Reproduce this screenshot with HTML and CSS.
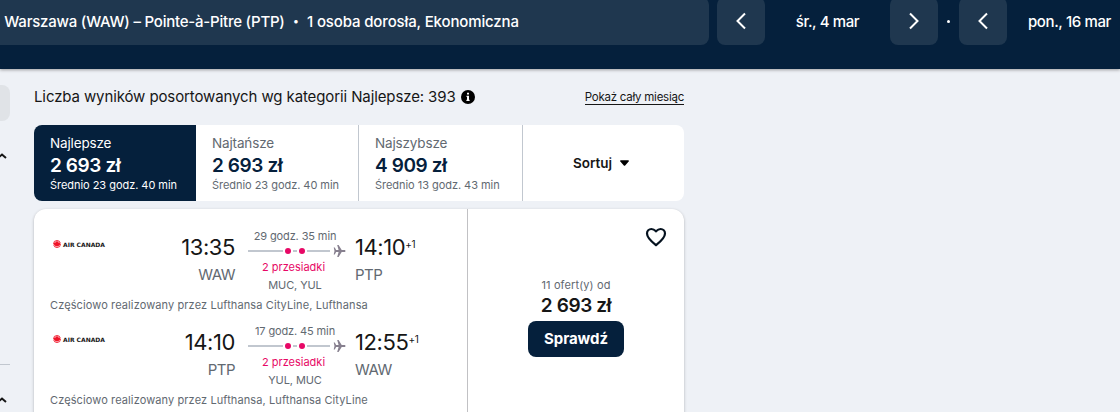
FILE: index.html
```html
<!DOCTYPE html>
<html lang="pl">
<head>
    <meta charset="UTF-8">
    <meta name="viewport" content="width=device-width, initial-scale=1.0">
    <title>Warszawa (WAW) – Pointe-à-Pitre (PTP)</title>
    <link rel="stylesheet" href="styles.css">
</head>
<body>
    <svg class="symbols" width="0" height="0">
        <symbol id="plane" viewBox="0 0 12 12">
            <path d="M0.2 2.6h1.1l1.3 2.4h2.5L3.7 0h1.4l3.1 5h2.6c.7 0 1.2.4 1.2 1s-.5 1-1.2 1H8.2L5.1 12H3.7l1.4-5H2.6L1.3 9.4H.2L1 6z"/>
        </symbol>
        <symbol id="rondelle" viewBox="0 0 16 16">
            <circle cx="8" cy="8" r="7" fill="none" stroke="#f01428" stroke-width="1.8" stroke-dasharray="20 1.5"/>
            <path fill="#f01428" d="M8 1.500l1.500 2.200 1.600-.6-.4 2.600 2-1 .5 1.200 1.400.2-.9 2 .7.8-3 2.400.3 1.300-3.100-.5.1 2.600h-1.400l.1-2.600-3.100.5.3-1.300-3-2.400.7-.8-.9-2 1.400-.2.500-1.200 2 1-.4-2.600 1.600.6z"/>
        </symbol>
    </svg>

    <header class="header">
        <button class="search">
            <span class="route">Warszawa (WAW) – Pointe-à-Pitre (PTP)</span>
            <span class="bullet">•</span>
            <span class="travellers">1 osoba dorosła, Ekonomiczna</span>
        </button>
        <button class="arrow"><svg width="24" height="24" viewBox="0 0 24 24"><path d="M16 4.5L8.5 12l7.5 7.5"/></svg></button>
        <span class="date">śr., 4 mar</span>
        <button class="arrow"><svg width="24" height="24" viewBox="0 0 24 24"><path d="M8 4.5l7.5 7.5L8 19.5"/></svg></button>
        <span class="separator"></span>
        <button class="arrow"><svg width="24" height="24" viewBox="0 0 24 24"><path d="M16 4.5L8.5 12l7.5 7.5"/></svg></button>
        <span class="date">pon., 16 mar</span>
    </header>

    <main class="page">
        <aside class="filters">
            <div class="filter-button"></div>
            <svg class="chevron" width="10" height="8" viewBox="0 0 10 8"><path d="M-2 6l4-3.500 4 3.500"/></svg>
            <div class="filter-line"></div>
            <svg class="chevron" width="10" height="8" viewBox="0 0 10 8"><path d="M-2 6l4-3.500 4 3.500"/></svg>
        </aside>

        <section class="results">
            <div class="summary">
                <span class="count">Liczba wyników posortowanych wg kategorii Najlepsze: 393</span>
                <svg class="info" width="14" height="14" viewBox="0 0 14 14"><circle cx="7" cy="7" r="7"/><path fill="#fff" d="M6 2.800h2v1.800H6zM5.500 5.800H8v4h.6v1.300H5.400V9.800H6V7h-.5z"/></svg>
                <a class="month">Pokaż cały miesiąc</a>
            </div>

            <div class="tabs">
                <div class="tab active">
                    <span class="tab-name">Najlepsze</span>
                    <span class="tab-price">2 693 zł</span>
                    <span class="tab-time">Średnio 23 godz. 40 min</span>
                </div>
                <div class="tab">
                    <span class="tab-name">Najtańsze</span>
                    <span class="tab-price">2 693 zł</span>
                    <span class="tab-time">Średnio 23 godz. 40 min</span>
                </div>
                <div class="tab">
                    <span class="tab-name">Najszybsze</span>
                    <span class="tab-price">4 909 zł</span>
                    <span class="tab-time">Średnio 13 godz. 43 min</span>
                </div>
                <div class="sort">
                    <span>Sortuj</span>
                    <svg width="9" height="6" viewBox="0 0 8 5"><path d="M.8 0h6.400c.8 0 1 .7.500 1.200L4.600 4.700c-.4.400-.8.400-1.200 0L.3 1.200C-.2.700 0 0 .8 0z"/></svg>
                </div>
            </div>

            <article class="ticket">
                <div class="legs">
                    <div class="leg">
                        <div class="leg-row">
                            <div class="airline"><svg width="8" height="8"><use href="#rondelle"/></svg><span>AIR CANADA</span></div>
                            <div class="depart">
                                <span class="time">13:35</span>
                                <span class="airport">WAW</span>
                            </div>
                            <div class="stops">
                                <span class="duration">29 godz. 35 min</span>
                                <div class="track"><i></i><b></b><i class="mid"></i><b></b><i class="end"></i><svg width="13" height="12"><use href="#plane"/></svg></div>
                                <span class="stop-count">2 przesiadki</span>
                                <span class="via">MUC, YUL</span>
                            </div>
                            <div class="arrive">
                                <span class="time">14:10<sup>+1</sup></span>
                                <span class="airport">PTP</span>
                            </div>
                        </div>
                        <p class="operated">Częściowo realizowany przez Lufthansa CityLine, Lufthansa</p>
                    </div>
                    <div class="leg">
                        <div class="leg-row">
                            <div class="airline"><svg width="8" height="8"><use href="#rondelle"/></svg><span>AIR CANADA</span></div>
                            <div class="depart">
                                <span class="time">14:10</span>
                                <span class="airport">PTP</span>
                            </div>
                            <div class="stops">
                                <span class="duration">17 godz. 45 min</span>
                                <div class="track"><i></i><b></b><i class="mid"></i><b></b><i class="end"></i><svg width="13" height="12"><use href="#plane"/></svg></div>
                                <span class="stop-count">2 przesiadki</span>
                                <span class="via">YUL, MUC</span>
                            </div>
                            <div class="arrive">
                                <span class="time">12:55<sup>+1</sup></span>
                                <span class="airport">WAW</span>
                            </div>
                        </div>
                        <p class="operated">Częściowo realizowany przez Lufthansa, Lufthansa CityLine</p>
                    </div>
                </div>
                <div class="offer">
                    <svg class="heart" width="24" height="24" viewBox="0 0 24 24"><path d="M12 20.200C8.500 17.500 3 13.300 3 8.600 3 5.800 5 4 7.400 4 9.500 4 10.600 4.900 12 6.300 13.400 4.900 14.500 4 16.600 4 19 4 21 5.800 21 8.600c0 4.700-5.500 8.900-9 11.600z"/></svg>
                    <span class="offer-count">11 ofert(y) od</span>
                    <span class="offer-price">2 693 zł</span>
                    <button class="check">Sprawdź</button>
                </div>
            </article>
        </section>
    </main>
</body>
</html>
```

FILE: styles.css
```css
* { box-sizing: border-box; }
body {
    margin: 0;
    height: 412px;
    overflow: hidden;
    font-family: Inter, "Liberation Sans", sans-serif;
    color: #161616;
    background-color: #eef1f6;
}
button {
    border: none;
    padding: 0;
    font-family: inherit;
    color: white;
}
.symbols { display: none; }

/* top bar */
.header {
    display: flex;
    align-items: flex-end;
    height: 69px;
    padding-bottom: 24px;
    overflow: hidden;
    background-color: #05203c;
    color: white;
    box-shadow: 0 1px 3px rgba(37, 32, 31, 0.4);
    font-size: 15px;
    font-weight: 500;
}
.search {
    flex: none;
    display: flex;
    align-items: center;
    width: 709px;
    height: 48px;
    margin-right: 8px;
    padding-left: 4px;
    border-radius: 0 8px 8px 0;
    background-color: #1f374f;
    font-size: 15px;
    font-weight: 500;
    white-space: nowrap;
}
.route { width: 281px; letter-spacing: -0.22px; }
.bullet { width: 22px; text-align: center; font-size: 11px; }
.travellers { letter-spacing: -0.14px; }
.arrow {
    flex: none;
    display: flex;
    align-items: center;
    justify-content: center;
    width: 48px;
    height: 48px;
    border-radius: 8px;
    background-color: #1f374f;
}
.arrow svg { fill: none; stroke: white; stroke-width: 2; }
.date {
    flex: none;
    width: 125px;
    height: 48px;
    line-height: 50px;
    letter-spacing: -0.38px;
    text-align: center;
    white-space: nowrap;
}
.separator {
    flex: none;
    width: 3px;
    height: 3px;
    margin: 0 9px 22px;
    border-radius: 50%;
    background-color: white;
}

.page {
    display: flex;
    gap: 24px;
    height: 343px;
    overflow: hidden;
}

/* visible edge of the filters column */
.filters {
    display: flex;
    flex-direction: column;
    width: 10px;
    padding-top: 16px;
    overflow: hidden;
}
.filter-button {
    height: 36px;
    margin-bottom: 31px;
    border-radius: 0 8px 8px 0;
    background-color: #e0e3e7;
}
.chevron { fill: none; stroke: #161616; stroke-width: 2; }
.filter-line {
    height: 1px;
    margin: 204px 0 31px;
    background-color: #c1c7cf;
}

/* results */
.results { width: 650px; }
.summary {
    display: flex;
    align-items: center;
    height: 56px;
    padding-bottom: 1px;
}
.count {
    width: 427px;
    font-size: 15px;
    letter-spacing: -0.11px;
    white-space: nowrap;
}
.month {
    margin: 1px 0 0 auto;
    border-bottom: 1px solid #161616;
    font-size: 11.5px;
    line-height: 14px;
    letter-spacing: -0.25px;
    white-space: nowrap;
}
.tabs {
    display: grid;
    grid-template-columns: 162px 163px 164px 161px;
    height: 76px;
    overflow: hidden;
    border-radius: 8px;
    background-color: white;
}
.tab {
    display: flex;
    flex-direction: column;
    padding: 9px 0 0 16px;
    border-right: 1px solid #c1c7cf;
    color: #626971;
    white-space: nowrap;
}
.tab.active { border: none; background-color: #05203c; color: white; }
.tab-name { font-size: 13.5px; line-height: 19px; letter-spacing: -0.15px; }
.tab-price {
    margin-top: 1px;
    font-size: 19px;
    line-height: 24px;
    font-weight: 600;
    letter-spacing: -0.4px;
    color: #05203c;
}
.tab-time { font-size: 11px; line-height: 15px; letter-spacing: -0.04px; }
.active .tab-price { color: white; }
.sort {
    display: flex;
    align-items: center;
    justify-content: center;
    gap: 8px;
    padding-right: 5px;
    font-size: 13.5px;
    font-weight: 600;
}

.ticket {
    display: flex;
    height: 230px;
    margin-top: 8px;
    border-radius: 12px;
    background-color: white;
    box-shadow: 0 1px 3px rgba(37, 32, 31, 0.3);
}
.legs {
    width: 434px;
    padding: 19px 0 0 16px;
    border-right: 1px solid #c1c1c4;
}
.leg { height: 95px; }
.leg-row { display: flex; height: 68px; }
.airline {
    display: flex;
    align-items: center;
    gap: 2px;
    width: 100px;
    height: 32px;
    padding-left: 3px;
    font-family: "DejaVu Sans", sans-serif;
    font-size: 6px;
    font-weight: 700;
    white-space: nowrap;
}
.depart, .arrive {
    display: flex;
    flex-direction: column;
    padding-top: 4px;
}
.depart { width: 85px; align-items: flex-end; }
.time {
    position: relative;
    font-size: 22px;
    line-height: 30px;
    letter-spacing: -0.4px;
}
.time sup {
    position: absolute;
    top: -3px;
    left: 100%;
    font-size: 10px;
    line-height: 30px;
}
.airport {
    font-size: 15px;
    line-height: 26px;
    letter-spacing: -0.5px;
    color: #626971;
}
.stops {
    display: flex;
    flex-direction: column;
    align-items: center;
    width: 94px;
    margin: 0 13px;
    color: #626971;
    font-size: 11px;
    white-space: nowrap;
}
.duration { line-height: 16px; letter-spacing: -0.12px; }
.stop-count { margin: 1px 3px 0 0; line-height: 19px; color: #e70866; }
.via { line-height: 17px; letter-spacing: -0.1px; }
.track {
    display: flex;
    align-items: center;
    width: 98px;
    height: 13px;
    margin-left: 4px;
}
.track i { width: 35px; height: 2px; background-color: #c1c7cf; }
.track b {
    width: 6px;
    height: 6px;
    margin: 0 2px;
    border-radius: 50%;
    background-color: #e70866;
}
.track .mid { width: 4px; }
.track .end { width: 23px; }
.track svg { margin-left: 3px; fill: #87808f; }
.operated {
    margin: 0;
    font-size: 11px;
    line-height: 18px;
    letter-spacing: 0.11px;
    color: #626971;
    white-space: nowrap;
}

.offer {
    display: flex;
    flex-direction: column;
    align-items: center;
    width: 216px;
    padding-top: 16px;
}
.heart {
    align-self: flex-end;
    margin: 0 16px 28px 0;
    fill: none;
    stroke: #05121f;
    stroke-width: 2.2;
}
.offer-count { font-size: 11px; line-height: 16px; letter-spacing: 0.12px; color: #626971; }
.offer-price {
    margin-top: 1px;
    font-size: 19px;
    line-height: 24px;
    font-weight: 600;
    letter-spacing: -0.4px;
}
.check {
    width: 96px;
    height: 36px;
    margin-top: 3px;
    padding-bottom: 1px;
    border-radius: 8px;
    background-color: #05203c;
    font-size: 15px;
    font-weight: 700;
    letter-spacing: -0.1px;
}
```
